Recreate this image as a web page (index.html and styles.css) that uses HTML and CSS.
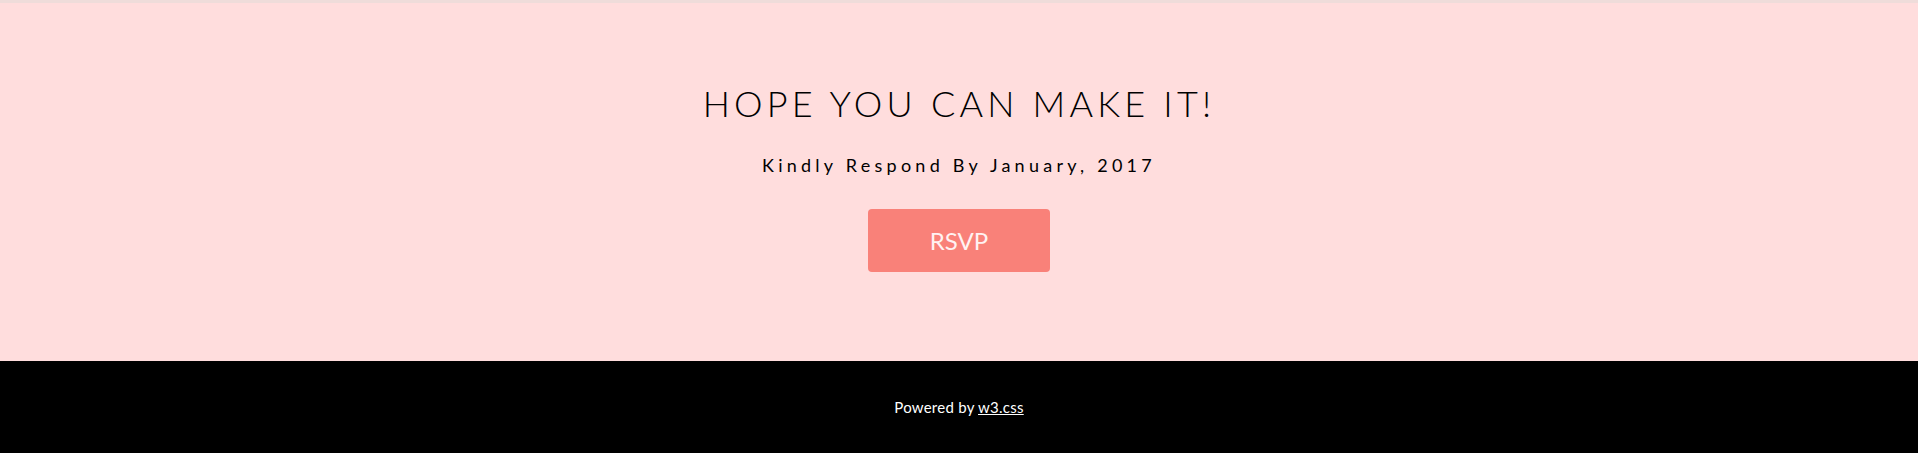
FILE: index.html
```html
<!DOCTYPE html>
<html lang="en">
<head>
<meta charset="utf-8">
<title>RSVP</title>
<link rel="stylesheet" href="styles.css">
</head>
<body>
<div class="page">
  <div class="strip"></div>
  <section class="rsvp">
    <h1 class="rsvp-title">HOPE YOU CAN MAKE IT!</h1>
    <p class="rsvp-sub">Kindly Respond By January, 2017</p>
    <div class="rsvp-action">
      <button class="rsvp-btn" type="button">RSVP</button>
    </div>
  </section>
  <footer class="footer">
    <p class="footer-text">Powered by <a href="#" class="footer-link">w3.css</a></p>
  </footer>
</div>
</body>
</html>
```

FILE: styles.css
```css
html, body {
  margin: 0;
  padding: 0;
  background: #ffffff;
}

body {
  font-family: "Lato", "Open Sans", sans-serif;
  color: #000;
}

.page {
  margin-right: 2px;
}

.strip {
  height: 3px;
  background: #efdcda;
}

.rsvp {
  background: #ffdddd;
  text-align: center;
  height: 358px;
  box-sizing: border-box;
  padding-top: 79px;
}

.rsvp-title {
  margin: 0;
  font-size: 36px;
  line-height: 43px;
  font-weight: 300;
  letter-spacing: 4.2px;
}

.rsvp-sub {
  margin: 27px 0 0;
  font-size: 18px;
  line-height: 27px;
  font-weight: 400;
  letter-spacing: 4.25px;
}

.rsvp-action {
  margin-top: 30px;
  display: flex;
  justify-content: center;
}

.rsvp-btn {
  font-family: inherit;
  font-size: 24px;
  line-height: 36px;
  height: 63px;
  width: 182px;
  padding: 0;
  border: none;
  border-radius: 4px;
  background: #f98179;
  color: #fff2f2;
  letter-spacing: 0;
}

.footer {
  background: #000;
  height: 92px;
  display: flex;
  align-items: center;
  justify-content: center;
}

.footer-text {
  margin: 0;
  color: #fff;
  font-size: 15px;
  line-height: 22px;
  letter-spacing: 0.25px;
}

.footer-link {
  color: #fff;
  text-decoration: underline;
}
```
